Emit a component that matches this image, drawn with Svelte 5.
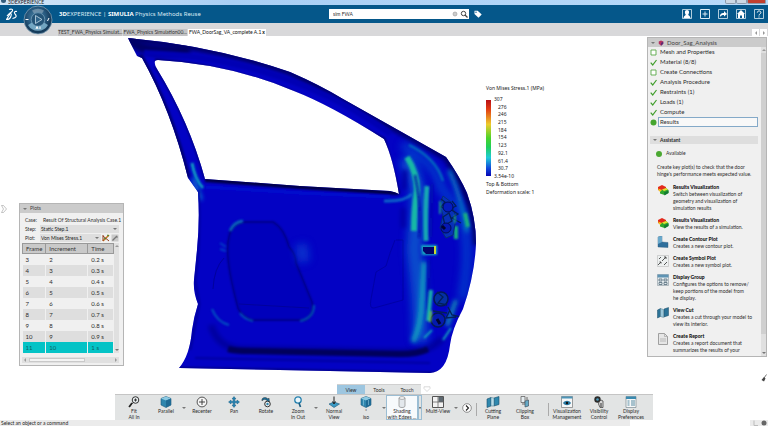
<script>
  let search = $state('sim FWA');
  let activeTab = $state(2);
  let activeStep = $state('Results');
  let selectedFrame = $state(11);
  let section = $state('View');

  const tabs = ['TEST_FWA_Physics Simulat...', 'FWA_Physics Simulation00...', 'FWA_DoorSag_VA_complete A.1'];

  const steps = [
    { label: 'Mesh and Properties', done: false },
    { label: 'Material (8/8)', done: true },
    { label: 'Create Connections', done: false },
    { label: 'Analysis Procedure', done: true },
    { label: 'Restraints (1)', done: true },
    { label: 'Loads (1)', done: true },
    { label: 'Compute', done: true },
    { label: 'Results', done: true, current: true }
  ];

  const actions = [
    { icon: 'results', title: 'Results Visualization', lines: ['Switch between visualization of', 'geometry and visualization of', 'simulation results'] },
    { icon: 'results', title: 'Results Visualization', lines: ['View the results of a simulation.'] },
    { icon: 'contour', title: 'Create Contour Plot', lines: ['Creates a new contour plot.'] },
    { icon: 'symbol', title: 'Create Symbol Plot', lines: ['Creates a new symbol plot.'] },
    { icon: 'group', title: 'Display Group', lines: ['Configures the options to remove/', 'keep portions of the model from', 'he display.'] },
    { icon: 'cut', title: 'View Cut', lines: ['Creates a cut through your model to', 'view its interior.'] },
    { icon: 'report', title: 'Create Report', lines: ['Creates a report document that', 'summarizes the results of your'] }
  ];

  const frames = [3, 4, 5, 6, 7, 8, 9, 10, 11].map((n) => ({
    frame: n,
    increment: n - 1,
    time: n === 11 ? '1 s' : `0.${n - 1} s`
  }));

  const legend = ['307', '276', '246', '215', '184', '154', '123', '92.1', '61.4', '30.7', '3.54e-10'];

  const tools = [
    { id: 'fit', lines: ['Fit', 'All In'] },
    { id: 'cube', lines: ['Parallel'], menu: true },
    { id: 'recenter', lines: ['Recenter'] },
    { id: 'pan', lines: ['Pan'] },
    { id: 'rotate', lines: ['Rotate'] },
    { id: 'zoom', lines: ['Zoom', 'In Out'], menu: true },
    { id: 'normal', lines: ['Normal', 'View'] },
    { id: 'iso', lines: ['*', 'iso'], menu: true },
    { id: 'shading', lines: ['Shading', 'with Edges ...'], menu: true, active: true },
    { id: 'multi', lines: ['Multi-View'], menu: true },
    { id: 'more' },
    { id: 'divider' },
    { id: 'cutting', lines: ['Cutting', 'Plane'] },
    { id: 'clipping', lines: ['Clipping', 'Box'] },
    { id: 'divider', wide: true },
    { id: 'visual', lines: ['Visualization', 'Management'] },
    { id: 'visibility', lines: ['Visibility', 'Control'] },
    { id: 'prefs', lines: ['Display', 'Preferences'] }
  ];
</script>

{#snippet toolIcon(id)}
  <svg class="tool-icon" viewBox="0 0 14 12" aria-hidden="true">
    {#if id === 'fit'}
      <circle cx="8.5" cy="4" r="3.3" fill="#e8eef0" stroke="#333" />
      <path d="M6 6.5L2.5 11M7 4h3M8.5 2.5v3" stroke="#333" fill="none" />
      <path d="M2 11l3-4" stroke="#222" stroke-width="1.6" />
    {:else if id === 'cube' || id === 'iso'}
      <path d="M7 .5l5 2v6.5l-5 2.5-5-2.5V2.5z" fill="#2f86ae" stroke="#1b5878" stroke-width=".6" />
      <path d="M7 .5l5 2-5 2-5-2z" fill="#8cc9e2" />
      <path d="M7 4.5l5-2v6.5l-5 2.5z" fill="#1f6a94" />
      {#if id === 'iso'}<path d="M4.500 3.500v6M9.500 4v5" stroke="#a7d8ea" stroke-width=".5" />{/if}
    {:else if id === 'recenter'}
      <circle cx="7" cy="6" r="4.9" fill="#f5f5f5" stroke="#444" stroke-width=".9" />
      <path d="M7 3v6M4 6h6" stroke="#333" stroke-width=".9" />
    {:else if id === 'pan'}
      <path d="M7 .5l2 2.5H7.800v2.200h2.200V4l2.500 2-2.500 2V6.800H7.800V9H9l-2 2.500L5 9h1.200V6.800H4V8L1.500 6 4 4v1.200h2.200V3H5z" fill="#2382b2" stroke="#125377" stroke-width=".4" />
    {:else if id === 'rotate'}
      <path d="M3 5C2 2 6 0 9 3l1-1 .5 4H7l1-1.500C6.500 3 4.500 3 3 5z" fill="#1c6e98" stroke="#222" stroke-width=".4" />
      <circle cx="8.500" cy="8" r="2.800" fill="#eee" stroke="#333" />
      <circle cx="8.500" cy="8" r="1.200" fill="#2a83ae" />
    {:else if id === 'zoom'}
      <circle cx="7" cy="4" r="3.200" fill="#eaf5fa" stroke="#2580ae" stroke-width="1.300" />
      <path d="M8 7l1.500 4" stroke="#1b5c80" stroke-width="1.700" />
    {:else if id === 'normal'}
      <path d="M2 8l5-2 5.500 2L7 11.500z" fill="#3a9ac4" stroke="#1b5878" stroke-width=".6" />
      <path d="M7 .5v7M5.500 5.500L7 8l1.500-2.500" stroke="#222" fill="none" />
    {:else if id === 'shading'}
      <path d="M4 2v8c0 2 6 2 6 0V2" fill="#e3e8ec" stroke="#888" stroke-width=".7" />
      <ellipse cx="7" cy="2" rx="3" ry="1.300" fill="#fff" stroke="#888" stroke-width=".7" />
    {:else if id === 'multi'}
      <path d="M1.500 .5h11v11h-11z" fill="#f2f2f2" stroke="#555" />
      <path d="M7.500 1h4.500v5H7.500z" fill="#5d6870" />
      <path d="M7 1v10.500M2 6h10.500" stroke="#666" stroke-width=".8" />
    {:else if id === 'cutting'}
      <path d="M1 3l4-1.500v8.500L1 11.500zM8 2l5-1.500v8L8 10z" fill="#2f88ae" stroke="#174f6c" stroke-width=".6" />
      <path d="M5 1.500l3 .5v8l-3 0z" fill="#b8dce8" stroke="#47778c" stroke-width=".5" />
    {:else if id === 'clipping'}
      <path d="M3 .5h4v6H3z" fill="#e5edf0" stroke="#555" stroke-width=".7" />
      <path d="M7 5l3.500-1v6L7 11z" fill="#65aac6" stroke="#345" stroke-width=".6" />
      <path d="M4 8h3M9 1v3" stroke="#333" stroke-width=".7" />
    {:else if id === 'visual'}
      <path d="M1.500 .5h11v11h-11z" fill="#f5f7f8" stroke="#777" stroke-width=".7" />
      <path d="M1.500 .5h11v2h-11z" fill="#4d95b8" />
      <path d="M3 7c2-3 6-3 8 0-2 3-6 3-8 0z" fill="#2a79a2" />
      <circle cx="7" cy="7" r="1.200" fill="#111" />
    {:else if id === 'visibility'}
      <circle cx="5.500" cy="3.500" r="3.200" fill="#2b2b2b" />
      <circle cx="5.500" cy="3.500" r="1.300" fill="#4f9bbb" />
      <path d="M7 6l2-2 2 1v6.500H8L6.500 8z" fill="#d8d8d8" stroke="#333" stroke-width=".7" />
      <path d="M9 7v4" stroke="#333" />
    {:else if id === 'prefs'}
      <path d="M2 .5h10v11H2z" fill="#f5f7f8" stroke="#7b8990" stroke-width=".7" />
      <path d="M2 .5h10v2.500H2z" fill="#3a8ab0" />
      <path d="M3.500 5h2M3.500 7h2M3.500 9h2M7 5h4M7 7h4M7 9h4" stroke="#487f98" stroke-width=".9" />
    {/if}
  </svg>
{/snippet}

{#snippet actionIcon(id)}
  <svg class="action-icon" viewBox="0 0 12 12" aria-hidden="true">
    {#if id === 'results'}
      <path d="M1 3l4-2 4 2v3L5 7.500 1 6z" fill="#e32a1c" />
      <path d="M1 4.500l4 1.500v3L2 7z" fill="#f2c51c" />
      <path d="M5 6l4-2 2.500 2v3L7.500 11 3 9.500V8z" fill="#2ea72c" />
      <path d="M5 5.500l4-1.500 2 1.500-4 1.500z" fill="#e8df32" />
      <path d="M7 8.500l4.500-2v2.500L7.500 11.500z" fill="#157a35" />
    {:else if id === 'contour'}
      <path d="M1 1l4-1v6l6 .5v5L1 11z" fill="#2f6f9c" stroke="#28587c" stroke-width=".4" />
      <path d="M1 1l4-1v6l-4 2z" fill="#6aa9cc" />
    {:else if id === 'symbol'}
      <path d="M.5 .5h11v11H.5z" fill="#edf0f0" stroke="#b0b0b0" stroke-width=".5" />
      <path d="M1 10l3-3M5 6l4-4M7 10l3-3M2 4l2-2M9 2H7M9 2v2M4 7H2.500M4 7v1.500" stroke="#444" stroke-width=".9" fill="none" />
    {:else if id === 'group'}
      <path d="M.5 .5h11v11H.5z" fill="#e4ebee" stroke="#8997a0" stroke-width=".6" />
      <path d="M.5 .5h11v3H.5z" fill="#5e93b3" />
      <path d="M2 5h3v2H2zM7 5h3v2H7zM2 8.500h3v2H2zM7 8.500h3v2H7z" fill="none" stroke="#536b78" stroke-width=".8" />
    {:else if id === 'cut'}
      <path d="M.5 3l3-1.500v8L.5 11zM7 2l4.500-1.500v8L7 10z" fill="#2b7297" stroke="#1b4d69" stroke-width=".5" />
      <path d="M3.500 1.500l3 1v8l-3-1z" fill="#9bc7da" stroke="#4c7b90" stroke-width=".5" />
    {:else}
      <path d="M1.500 .5h6l3 3v8h-9z" fill="#e6e6e6" stroke="#8d8d8d" stroke-width=".8" />
      <path d="M7.500 .5v3h3M3 6h6M3 8h6" fill="none" stroke="#a4a4a4" stroke-width=".7" />
    {/if}
  </svg>
{/snippet}

<div class="app">
  <div class="titlebar">
    <span class="logo-dot"></span>
    <span class="window-title">3DEXPERIENCE</span>
    <div class="window-buttons">
      <button aria-label="Minimize"></button>
      <button aria-label="Maximize"></button>
      <button class="close" aria-label="Close"></button>
    </div>
  </div>

  <header class="topbar">
    <svg class="ds-logo" viewBox="0 0 12 13" aria-hidden="true">
      <path d="M3 1.500c3-1 4.500 0 3 2L3.500 5.500M1 8c3-4 5-3 4 0-.5 2-2 3.500-4.500 3.500L4 6M11 3.500c-2-.5-3.500.5-2 2.500 2 2 1.500 4-2.500 4.500" fill="none" stroke="#fff" stroke-width="1.100" />
    </svg>
    <button class="compass" aria-label="Compass">
      <svg viewBox="0 0 30 30" aria-hidden="true">
        <defs>
          <radialGradient id="compass-ring" cx=".45" cy=".4">
            <stop offset="0" stop-color="#4e88ab" />
            <stop offset=".65" stop-color="#285a7f" />
            <stop offset="1" stop-color="#163c5c" />
          </radialGradient>
        </defs>
        <circle cx="15" cy="15" r="14" fill="url(#compass-ring)" stroke="#8babc0" stroke-width=".7" />
        <path d="M5 20a11.500 11.500 0 0 0 20 0l-4-2.500a7 7 0 0 1-12 0z" fill="#8dc3dc" opacity=".75" />
        <path d="M9 5.500a11.500 11.500 0 0 1 12 0l-2 3a8 8 0 0 0-8 0z" fill="#a5b8c5" opacity=".5" />
        <circle cx="15" cy="14.500" r="6.800" fill="#245477" stroke="#7fa8c2" stroke-width=".7" />
        <path d="M12.500 10.500l6.500 4-6.500 4z" fill="#2f6489" stroke="#c5dbe8" stroke-width=".8" />
        <path d="M2.500 14.500h3M26 13l-1.500 3M13 24l1-2.500 1 2.500M17 21.500V24" stroke="#fff" fill="none" />
      </svg>
    </button>
    <h1><b>3D</b>EXPERIENCE | <b>SIMULIA</b> Physics Methods Reuse</h1>

    <label class="search">
      <input type="text" aria-label="Search" bind:value={search} />
      <svg viewBox="0 0 18 8" aria-hidden="true">
        <circle cx="4" cy="4" r="2" fill="#ccc" stroke="#999" stroke-width=".6" />
        <circle cx="12.500" cy="3.500" r="2.200" fill="none" stroke="#444" />
        <path d="M14 5l2.500 2.500" stroke="#444" stroke-width="1.200" />
      </svg>
    </label>
    <button class="tag" aria-label="Tags">
      <svg viewBox="0 0 8 8" aria-hidden="true">
        <path d="M.5 .8h3.200l4 3.700-3.200 3.200-4-3.700z" fill="#fff" />
        <circle cx="2" cy="2.300" r=".7" fill="#05578a" />
      </svg>
    </button>

    <nav class="top-icons">
      <button aria-label="Profile">
        <svg viewBox="0 0 10 10"><path d="M.5 .5h9v9h-9z" fill="none" stroke="#dcebf3" stroke-width=".8" /><path d="M5 1c2.500 0 2.500 3 1.200 4.500 0 1 1.800 1 2.300 3.500h-7C2 6.500 3.800 6.500 3.800 5.500 2.500 4 2.500 1 5 1z" fill="#fff" /></svg>
      </button>
      <button aria-label="Add">
        <svg viewBox="0 0 10 10"><path d="M.5 .5h9v9h-9zM5 2.500v5M2.500 5h5" fill="none" stroke="#dcebf3" /></svg>
      </button>
      <button aria-label="Share">
        <svg viewBox="0 0 10 10"><path d="M.5 .5h9v9h-9z" fill="none" stroke="#dcebf3" stroke-width=".8" /><path d="M2 8c0-3 1-4 4-4V2l3 3-3 2.500V6C4 6 3 6.500 2 8z" fill="#fff" /></svg>
      </button>
      <button aria-label="Home">
        <svg viewBox="0 0 10 10"><path d="M.5 .5h9v9h-9z" fill="none" stroke="#dcebf3" stroke-width=".8" /><path d="M5 1l4 4H8v4H6V6.500H4V9H2V5H1z" fill="#fff" /></svg>
      </button>
      <button aria-label="Help">
        <svg viewBox="0 0 10 10"><path d="M.5 .5h9v9h-9z" fill="none" stroke="#dcebf3" stroke-width=".8" /><path d="M3.300 3.600c0-2.200 3.600-2.200 3.600 0C6.900 5 5 4.800 5 6.500M5 7.500v1" fill="none" stroke="#fff" /></svg>
      </button>
    </nav>
  </header>

  <div class="tabs">
    {#each tabs as tab, i}
      <button class="tab" class:active={activeTab === i} onclick={() => (activeTab = i)}>
        <span>{tab}</span>{#if activeTab === i}<b>x</b>{/if}
      </button>
    {/each}
    <div class="tab-arrows">
      <button aria-label="Previous tab"><span class="arrow left"></span></button>
      <button aria-label="Next tab"><span class="arrow right"></span></button>
    </div>
  </div>

  <main class="viewport">
    <svg class="model" viewBox="0 36 768 384" preserveAspectRatio="xMinYMin meet" role="img" aria-label="Car door stress plot">
      <defs>
        <filter id="blur1" filterUnits="userSpaceOnUse" x="100" y="20" width="400" height="370"><feGaussianBlur stdDeviation="1.200" /></filter>
        <filter id="blur2" filterUnits="userSpaceOnUse" x="100" y="20" width="400" height="370"><feGaussianBlur stdDeviation="2" /></filter>
        <filter id="blur4" filterUnits="userSpaceOnUse" x="100" y="20" width="400" height="370"><feGaussianBlur stdDeviation="4" /></filter>
        <clipPath id="door-clip">
          <path
            clip-rule="evenodd"
            d="M128 38Q215 46 290 72Q320 85 343 99L446 157Q460 177 467 193Q476 218 476 243Q475 274 463 309Q452 329 450 345Q447 372 430 373L179 368Q190 355 192 330Q194 316 198 304Q193 292 194 280L197 250Q200 220 198 192L188 178Q171 110 142 58L137 56zM155 61Q154 64 157 69Q189 121 205 179L300 186L390 191Q395 192 399 194Q393 158 384 139Q330 105 294 91Q230 64 158 60Q156 60 155 61z"
          />
        </clipPath>
      </defs>
      <g clip-path="url(#door-clip)" fill="none">
        <path d="M120 30h370v350H120z" fill="#0302c4" />

        <!-- window frame -->
        <path d="M128 39Q215 46 290 72L343 99 446 157Q476 200 476 245" stroke="#010166" stroke-width="7" filter="url(#blur2)" />
        <path d="M128 38Q140 55 190 49" stroke="#010166" stroke-width="10" filter="url(#blur2)" />
        <path d="M144 53Q215 55 280 77T390 134" stroke="#0404b4" stroke-width="6" filter="url(#blur1)" />
        <path d="M155 60Q220 64 290 91L384 139 399 194" stroke="#020270" stroke-width="3" filter="url(#blur1)" />
        <path d="M140 55Q171 110 188 178" stroke="#010170" stroke-width="5" filter="url(#blur1)" />
        <path d="M155 66Q187 115 205 178" stroke="#020288" stroke-width="3" filter="url(#blur1)" />
        <path d="M205 180L300 187 398 193" stroke="#010142" stroke-width="4" filter="url(#blur1)" />
        <path d="M206 187L300 193 390 197" stroke="#0510cf" stroke-width="3" filter="url(#blur1)" />
        <path d="M192 163Q195 180 203 188" stroke="#0ba0c2" stroke-width="3" filter="url(#blur1)" />
        <path d="M193 178L201 200" stroke="#0a72d0" stroke-width="4" filter="url(#blur2)" />

        <!-- lower edge -->
        <path d="M211 325Q217 346 238 349L400 352Q432 352 442 338" stroke="#0202a0" stroke-width="7" filter="url(#blur2)" />
        <path d="M228 349Q235 351 250 351L400 354Q418 354 428 349" stroke="#01015c" stroke-width="6" filter="url(#blur1)" />
        <path d="M195 358L430 363" stroke="#0202a0" stroke-width="2" filter="url(#blur1)" />
        <path d="M179 368L440 373" stroke="#020278" stroke-width="2" filter="url(#blur1)" />
        <path d="M198 190Q201 235 195 280L199 304 190 350" stroke="#0203a3" stroke-width="3" filter="url(#blur1)" />

        <!-- speaker opening -->
        <path d="M229 237Q231 223 245 222H273Q284 228 289 247Q296 254 296 263L312 302Q315 315 305 320H251Q238 314 237 304Q224 255 229 237" fill="#0202bb" stroke="#010190" stroke-width="2" filter="url(#blur1)" />
        <path d="M229 237Q231 223 245 222H273Q284 228 289 247Q296 254 296 263L312 302Q315 315 305 320H251Q238 314 237 304Q224 255 229 237" stroke="#010192" stroke-width=".8" />
        <path d="M239 304L309 308M224 258Q214 268 213 289" stroke="#02029c" stroke-width="1" />
        <path d="M230 231Q234 222 243 221" stroke="#0880bd" stroke-width="3" filter="url(#blur1)" opacity=".8" />
        <path d="M301 244L304 262" stroke="#0749d2" stroke-width="12" filter="url(#blur4)" opacity=".7" />
        <path d="M314 305Q314 318 300 321M240 313Q244 319 253 321M212 309Q217 322 229 325" stroke="#0778c0" stroke-width="2" filter="url(#blur1)" opacity=".75" />
        <path d="M220 243L226 247M220 249L226 251" stroke="#056cc8" stroke-width="2" filter="url(#blur1)" opacity=".6" />

        <!-- inner panel outline -->
        <path d="M396 240H403V300L374 308Q369 309 371 299L376 272 386 266Q390 252 395 240" stroke="#0101a0" stroke-width=".8" />

        <!-- hinge side stress bands -->
        <path d="M405 158Q418 178 418 202L414 250Q421 304 420 342" stroke="#0762cf" stroke-width="15" filter="url(#blur4)" opacity=".8" />
        <path d="M402 145Q438 165 441 188L461 212Q472 247 462 300" stroke="#0650cf" stroke-width="8" filter="url(#blur4)" opacity=".8" />
        <path d="M407 157Q417 173 417 190Q414 209 414 231" stroke="#14b8a6" stroke-width="6" filter="url(#blur1)" />
        <path d="M427 186Q425 209 426 241" stroke="#12a8b4" stroke-width="5" filter="url(#blur1)" />
        <path d="M424 262L422 300Q421 326 413 342" stroke="#109fc0" stroke-width="5" filter="url(#blur2)" />
        <path d="M409 145Q436 158 443 181" stroke="#078abc" stroke-width="2" filter="url(#blur1)" opacity=".8" />
        <path d="M415 175Q422 209 419 238M432 184L431 237M429 260L428 310" stroke="#020bae" stroke-width="2" filter="url(#blur1)" />
        <path d="M384 201Q404 202 412 194" stroke="#0b83cb" stroke-width="3" filter="url(#blur1)" opacity=".8" />
        <path d="M449 170Q463 202 467 232" stroke="#087ac0" stroke-width="4" filter="url(#blur2)" />
        <path d="M465 213L468 227M456 226V239" stroke="#18b080" stroke-width="4" filter="url(#blur1)" />
        <path d="M431 290L428 321" stroke="#17b0ab" stroke-width="4" filter="url(#blur1)" />
        <path d="M456 300L447 326" stroke="#1192b6" stroke-width="4" filter="url(#blur2)" />
        <path d="M432 330L424 338M451 328L443 340" stroke="#12a3bd" stroke-width="2" filter="url(#blur1)" />
        <path d="M405 170L404 190M403 208V228" stroke="#0406a6" stroke-width="5" filter="url(#blur2)" />

        <!-- latch slot -->
        <path d="M421 245H437V255H422z" fill="#13a6c0" filter="url(#blur1)" />
        <path d="M435 246V254" stroke="#c8d832" stroke-width="2" />
        <path d="M423 247H434V254H426L423 251z" fill="#02026c" />

        <!-- hinges -->
        <path d="M443 196L440 205 443 215 440 228 446 238 453 235 456 218 451 202z" fill="#0730b8" stroke="#05307a" stroke-width="1" />
        <path d="M441 199l4 3-4 5 5 2M452 201l4 5-6 3 8 5-6 4 9 5M443 217l6-4 3 8-7 4z" stroke="#021f5a" stroke-width="1.300" />
        <circle cx="448" cy="207" r="5" fill="#041bbf" stroke="#010d5b" />
        <circle cx="446" cy="228" r="5" fill="#0518b1" stroke="#010d5b" />
        <path d="M440 201v13M455 215v8" stroke="#2abf86" stroke-width="1.500" filter="url(#blur1)" />
        <circle cx="441" cy="299" r="7" fill="#0530a4" stroke="#031958" stroke-width="1.500" />
        <circle cx="438" cy="320" r="7" fill="#041aae" stroke="#031958" stroke-width="1.500" />
        <path d="M437 292l6 5-5 6 9 2M448 307l4 8 9 2M433 311l14 2M450 310l-4 8 10-1" stroke="#02205a" stroke-width="1.300" />
        <path d="M431 311L430 322" stroke="#7fd344" stroke-width="2" filter="url(#blur1)" />
        <path d="M437 319l3 5M442 226l3 3" stroke="#000431" stroke-width="3" />
      </g>
    </svg>

    <button class="drawer" aria-label="Open tree">
      <svg viewBox="0 0 6 8"><path d="M.5 .5l2 0 3 3.500-3 3.500h-2l2-3.500z" fill="#fff" stroke="#aaa" stroke-width=".7" /></svg>
    </button>

    <figure class="legend">
      <figcaption>Von Mises Stress.1 (MPa)</figcaption>
      <div class="scale">
        <div class="ramp"></div>
        <ol>
          {#each legend as value, i}
            <li class:edge={i === 0 || i === legend.length - 1}>{value}</li>
          {/each}
        </ol>
      </div>
      <p>Top &amp; Bottom</p>
      <p>Deformation scale: 1</p>
    </figure>

    <section class="panel plots">
      <h2><span class="arrow down"></span>Plots</h2>
      <div class="plot-form">
        <span>Case:</span>
        <span class="case">Result Of Structural Analysis Case.1</span>
        <label for="step">Step:</label>
        <div class="select wide">
          <select id="step"><option>Static Step.1</option></select>
          <span class="arrow down"></span>
        </div>
        <label for="plot">Plot:</label>
        <div class="select">
          <select id="plot"><option>Von Mises Stress.1</option></select>
          <span class="arrow down"></span>
        </div>
        <button aria-label="Edit plot">
          <svg viewBox="0 0 8 8"><path d="M1 7l6-6" stroke="#c8731d" stroke-width="1.500" /><path d="M1 2l6 5M1 1v6" stroke="#913b1b" /><path d="M5 1l2 1M2 4l2 1" stroke="#3b8a2e" /></svg>
        </button>
        <button aria-label="Plot options">
          <svg viewBox="0 0 8 8"><path d="M.5 .5h7v7h-7z" fill="#c9c9c9" /><path d="M1.500 6.500l4-4 1 1" fill="none" stroke="#777" stroke-width="1.300" /></svg>
        </button>
      </div>
      <div class="table-box">
        <table>
          <thead>
            <tr><th>Frame</th><th>Increment</th><th>Time</th></tr>
          </thead>
          <tbody>
            {#each frames as row}
              <tr class:selected={row.frame === selectedFrame} onclick={() => (selectedFrame = row.frame)}>
                <td>{row.frame}</td>
                <td>{row.increment}</td>
                <td>{row.time}</td>
              </tr>
            {/each}
          </tbody>
        </table>
        <div class="vscroll"><span class="arrow up"></span><span class="arrow down"></span></div>
      </div>
      <div class="hscroll"><span class="arrow left"></span><i></i><span class="arrow right"></span></div>
    </section>

    <aside class="panel guide">
      <h2>
        <span class="arrow down"></span>
        <svg viewBox="0 0 8 8" aria-hidden="true"><path d="M1 2l3-1.500L7 2v3L4 7.500 1 5z" fill="#b5305f" /><path d="M4 4l3-2v3L4 7.500z" fill="#5d2b74" /></svg>
        Door_Sag_Analysis
      </h2>
      <div class="guide-body">
        <div class="guide-content">
          <ul class="steps">
            {#each steps as step}
              <li>
                <svg viewBox="0 0 7 7" aria-hidden="true">
                  {#if step.current}
                    <circle cx="3.500" cy="3.500" r="3" fill="#45a52e" />
                  {:else if step.done}
                    <path d="M.7 3.700l2 2.300L6.500 1" fill="none" stroke="#3f9d2a" stroke-width="1.200" />
                  {:else}
                    <path d="M1 1h5v5H1z" fill="#fff" stroke="#5aa848" stroke-width=".9" />
                  {/if}
                </svg>
                <button class:active={activeStep === step.label} onclick={() => (activeStep = step.label)}>{step.label}</button>
              </li>
            {/each}
          </ul>
          <h3><span class="arrow down"></span>Assistant</h3>
          <p class="available"><i></i>Available</p>
          <p class="hint">Create key plot(s) to check that the door<br />hinge's performance meets expected value.</p>
          <div class="actions">
            {#each actions as action}
              <article>
                {@render actionIcon(action.icon)}
                <div>
                  <h4>{action.title}</h4>
                  {#each action.lines as line}
                    <p>{line}</p>
                  {/each}
                </div>
              </article>
            {/each}
          </div>
        </div>
        <div class="vscroll"><span class="arrow up"></span><i></i><span class="arrow down"></span></div>
      </div>
    </aside>

    <svg class="brush" viewBox="0 0 6 8" aria-hidden="true"><path d="M5.500 .5L3 4" stroke="#777" /><path d="M3 3l1.500 1.500L3 7.500.5 6z" fill="#444" /></svg>

    <div class="action-bar">
      <div class="sections">
        {#each ['View', 'Tools', 'Touch'] as name}
          <button class:active={section === name} onclick={() => (section = name)}>{name}</button>
        {/each}
        <svg viewBox="0 0 8 6" aria-hidden="true"><path d="M4 5.500L1 2.500V.8h6v1.700z" fill="#fff" stroke="#ccc" stroke-width=".7" /></svg>
      </div>
      <div class="tools">
        {#each tools as tool}
          {#if tool.id === 'divider'}
            <span class="divider" class:wide={tool.wide}></span>
          {:else if tool.id === 'more'}
            <button class="more" aria-label="More tools">
              <svg viewBox="0 0 10 10"><circle cx="5" cy="5" r="4.300" fill="#fff" stroke="#666" stroke-width=".7" /><path d="M4 2.500L6.500 5 4 7.500" fill="none" stroke="#222" stroke-width="1.100" /></svg>
            </button>
          {:else}
            <button class="tool" class:active={tool.active}>
              {@render toolIcon(tool.id)}
              {#each tool.lines as line}
                <span>{line}</span>
              {/each}
            </button>
            {#if tool.menu}
              <button class="menu" class:active={tool.active} aria-label="{tool.lines[0]} options"><span class="arrow down"></span></button>
            {/if}
          {/if}
        {/each}
      </div>
    </div>
  </main>

  <footer class="status">
    <span>Select an object or a command</span>
    <input type="text" aria-label="Command" />
    <svg viewBox="0 0 18 6" aria-hidden="true"><path d="M4 .5v5h4" fill="none" stroke="#bbb" /><circle cx="14" cy="3" r="2.500" fill="#666" /></svg>
  </footer>
</div>

<style>
  :global(body) {
    margin: 0;
  }

  .app {
    display: flex;
    flex-direction: column;
    height: 100vh;
    overflow: hidden;
    background: #fff;
    color: #2c2c2c;
    font-family: Lato, 'Noto Sans', sans-serif;
    font-size: 6px;
    line-height: 7px;
  }

  .app * {
    box-sizing: border-box;
  }

  h1, h2, h3, h4, p, ul, ol, figure {
    margin: 0;
    padding: 0;
    list-style: none;
    font-size: inherit;
  }

  button, input, select {
    margin: 0;
    padding: 0;
    border: 0;
    background: none;
    color: inherit;
    font: inherit;
  }

  svg {
    display: block;
    flex: none;
  }

  .arrow {
    flex: none;
    border: 2px solid transparent;
    width: 0;
    height: 0;
  }

  .arrow.down {
    border-top-color: #777;
    border-bottom: 0;
  }

  .arrow.up {
    border-bottom-color: #999;
    border-top: 0;
  }

  .arrow.left {
    border-right-color: #999;
    border-left: 0;
  }

  .arrow.right {
    border-left-color: #999;
    border-right: 0;
  }

  /* window title */
  .titlebar {
    display: flex;
    flex: none;
    align-items: flex-start;
    height: 5px;
    padding-left: 1px;
    background: linear-gradient(90deg, #d5e6f6, #a9cff5 30%, #b9dbfa);
  }

  .logo-dot {
    width: 5px;
    height: 3px;
    margin-right: 2px;
    border-radius: 0 0 3px 3px;
    background: #345d7c;
  }

  .window-title {
    color: #222;
    font-size: 5px;
    line-height: 5px;
  }

  .window-buttons {
    display: flex;
    margin-left: auto;
    padding-right: 2px;
  }

  .window-buttons button {
    width: 11px;
    height: 4px;
    border: 1px solid #8b9aaa;
    border-top: 0;
    border-radius: 0 0 2px 2px;
    background: #ccd8e4;
  }

  .window-buttons .close {
    width: 19px;
    background: #c2402f;
  }

  /* header */
  .topbar {
    position: relative;
    display: flex;
    flex: none;
    align-items: center;
    height: 18px;
    padding: 0 4px 0 6px;
    background: #05578a;
    color: #fff;
  }

  .ds-logo {
    width: 12px;
    height: 13px;
  }

  .compass {
    position: absolute;
    z-index: 2;
    top: 0;
    left: 23px;
  }

  .compass svg {
    width: 30px;
    height: 30px;
  }

  h1 {
    margin-left: 41px;
    width: 270px;
    color: #dbeaf3;
    font-family: 'Noto Sans', sans-serif;
    font-weight: 400;
    white-space: nowrap;
  }

  h1 b {
    color: #fff;
    font-weight: 700;
  }

  .search {
    display: flex;
    align-items: center;
    width: 140px;
    height: 10px;
    background: #fff;
  }

  .search input {
    flex: 1;
    min-width: 0;
    padding-left: 4px;
    color: #333;
    font-size: 5px;
    outline: 0;
  }

  .search svg {
    width: 18px;
    height: 8px;
  }

  .tag {
    margin-left: 5px;
  }

  .tag svg {
    width: 8px;
    height: 8px;
  }

  .top-icons {
    display: flex;
    gap: 8px;
    margin-left: auto;
  }

  .top-icons svg {
    width: 10px;
    height: 10px;
  }

  /* document tabs */
  .tabs {
    display: flex;
    flex: none;
    align-items: flex-end;
    gap: 1px;
    height: 13px;
    padding: 0 1px 0 58px;
    background: #d8d8da;
  }

  .tab {
    display: flex;
    justify-content: space-between;
    height: 7px;
    min-width: 61px;
    background: #c3c3c5;
    color: #333;
    font-size: 5px;
    line-height: 7px;
    white-space: nowrap;
  }

  .tab.active {
    min-width: 78px;
    padding: 0 1px;
    background: #fff;
    color: #111;
  }

  .tab-arrows {
    display: flex;
    gap: 1px;
    margin-left: auto;
  }

  .tab-arrows button {
    display: grid;
    place-items: center;
    width: 7px;
    height: 7px;
    background: #fff;
  }

  /* 3D viewport */
  .viewport {
    position: relative;
    flex: 1;
    min-height: 0;
  }

  .model {
    width: 100%;
    height: 100%;
  }

  .drawer {
    position: absolute;
    top: 169px;
    left: 1px;
  }

  .drawer svg {
    width: 6px;
    height: 8px;
  }

  .legend {
    position: absolute;
    top: 48px;
    left: 486px;
    color: #222;
    font-family: 'Noto Sans', sans-serif;
    font-size: 5px;
    line-height: 8px;
    white-space: nowrap;
  }

  .scale {
    display: flex;
    gap: 3px;
    margin-top: 4px;
  }

  .ramp {
    width: 5px;
    margin: 4px 0;
    background: linear-gradient(#b80f16, #e23b12 12%, #eecb2c 32%, #4bd42a 50%, #1fcf5a 62%, #20cbd8 76%, #1046dc 90%, #0505b4);
  }

  .legend ol {
    height: 84px;
    display: flex;
    flex-direction: column;
    justify-content: space-between;
  }

  .legend li {
    padding-left: 4px;
    line-height: 7px;
  }

  .legend li.edge {
    padding-left: 0;
  }

  /* floating panels */
  .panel {
    position: absolute;
    border: 1px solid #b5b5b5;
    background: #f0f0f0;
  }

  .panel h2 {
    display: flex;
    flex: none;
    align-items: center;
    gap: 3px;
    height: 9px;
    padding-left: 3px;
    background: #cbcbcb;
    color: #444;
    font-weight: 400;
  }

  .plots {
    top: 167px;
    left: 19px;
    width: 105px;
    padding-bottom: 2px;
    font-size: 5px;
  }

  .plot-form {
    display: grid;
    grid-template-columns: 15px 1fr 9px 9px;
    align-items: center;
    row-gap: 1px;
    padding: 3px 4px 1px 5px;
  }

  .plot-form > span,
  .select {
    height: 8px;
    line-height: 8px;
    white-space: nowrap;
  }

  .case {
    grid-column: 2 / 5;
    padding-left: 3px;
  }

  .select {
    display: flex;
    align-items: center;
    padding-right: 2px;
    background: #dedede;
  }

  .select.wide {
    grid-column: 2 / 5;
  }

  .select select {
    appearance: none;
    flex: 1;
    min-width: 0;
    height: 8px;
    padding-left: 1px;
    color: #222;
  }

  .plot-form svg {
    width: 8px;
    height: 8px;
    margin-left: 1px;
  }

  .table-box {
    display: flex;
    margin: 0 4px 0 2px;
  }

  table {
    flex: 1;
    table-layout: fixed;
    border-collapse: collapse;
    font-size: 6px;
    line-height: 7px;
  }

  th {
    height: 10px;
    padding: 0 3px;
    border: 1px solid #999;
    background: #c9c9c9;
    color: #333;
    font-weight: 400;
    text-align: left;
  }

  th:nth-child(1) {
    width: 22px;
  }

  th:nth-child(2) {
    width: 42px;
  }

  td {
    height: 11px;
    padding: 0 3px;
    border-right: 1px solid #f0f0f0;
  }

  tbody tr:nth-child(even) {
    background: #dedede;
  }

  tbody tr.selected {
    background: #04c3c6;
    color: #0d6164;
  }

  .vscroll {
    display: flex;
    flex-direction: column;
    flex: none;
    align-items: center;
    justify-content: space-between;
    width: 5px;
    padding: 2px 0;
    background: #e0e0e0;
  }

  .hscroll {
    display: flex;
    align-items: center;
    height: 6px;
    margin: 4px 4px 0 2px;
    padding: 0 2px;
    background: #e0e0e0;
  }

  .hscroll i {
    width: 56px;
    height: 4px;
    margin: 0 auto 0 3px;
    background: #f3f3f3;
    border: 1px solid #c9c9c9;
  }

  .guide {
    top: 1px;
    right: 1px;
    bottom: 63px;
    display: flex;
    flex-direction: column;
    width: 120px;
  }

  .guide h2 svg {
    width: 6px;
    height: 6px;
  }

  .guide-body {
    display: flex;
    flex: 1;
    min-height: 0;
  }

  .guide-content {
    flex: 1;
    min-width: 0;
    overflow: hidden;
    padding: 0 3px 0 2px;
    white-space: nowrap;
  }

  .guide .vscroll i {
    width: 5px;
    flex: 1;
    margin: 2px 0 18px;
    background: #d0d0d0;
  }

  .steps li {
    display: flex;
    align-items: center;
    gap: 1px;
    height: 10px;
  }

  .steps svg {
    width: 7px;
    height: 7px;
  }

  .steps button {
    flex: 1;
    height: 10px;
    padding-left: 1px;
    border: 1px solid transparent;
    line-height: 8px;
    text-align: left;
  }

  .steps button.active {
    border-color: #84a9c8;
    background: #f8f8f8;
  }

  h3 {
    display: flex;
    align-items: center;
    gap: 3px;
    height: 8px;
    margin-top: 9px;
    padding-left: 3px;
    background: #dedede;
    font-size: 5px;
  }

  .available {
    display: flex;
    align-items: center;
    gap: 4px;
    margin: 6px 0 0 6px;
    font-size: 5px;
  }

  .available i {
    width: 6px;
    height: 6px;
    border-radius: 50%;
    background: #4ba832;
  }

  .hint {
    margin: 7px 0 0 7px;
    font-size: 5px;
  }

  .actions {
    display: flex;
    flex-direction: column;
    gap: 5px;
    margin: 6px 0 0 7px;
    font-size: 5px;
  }

  article {
    display: flex;
    gap: 4px;
  }

  .action-icon {
    width: 12px;
    height: 12px;
  }

  h4 {
    color: #111;
    font-weight: 900;
  }

  .brush {
    position: absolute;
    right: 1px;
    bottom: 38px;
    width: 6px;
    height: 8px;
  }

  /* bottom action bar */
  .action-bar {
    position: absolute;
    right: 0;
    bottom: 0;
    left: 0;
    display: flex;
    flex-direction: column;
    align-items: center;
    font-size: 5px;
    line-height: 6px;
  }

  .sections {
    display: flex;
    align-items: center;
  }

  .sections button {
    width: 28px;
    height: 10px;
    border-top: 1px solid #d0d0d0;
    background: #e2e4e4;
  }

  .sections button.active {
    background: #9dc6e0;
  }

  .sections svg {
    width: 8px;
    height: 6px;
    margin-left: 2px;
  }

  .tools {
    display: flex;
    height: 26px;
    padding: 0 6px 0 3px;
    border-top: 1px solid #c5c5c5;
    background: #e2e4e4;
  }

  .tool {
    display: flex;
    flex-direction: column;
    align-items: center;
    width: 32px;
    padding-top: 1px;
    white-space: nowrap;
  }

  .tool.active {
    background: #f7fafc;
    outline: 1px solid #9bbdd3;
    outline-offset: -1px;
  }

  .tool-icon {
    width: 14px;
    height: 12px;
  }

  .menu {
    display: flex;
    align-items: center;
    width: 4px;
  }

  .menu.active {
    outline: 1px solid #9bbdd3;
    outline-offset: -1px;
  }

  .more {
    display: grid;
    place-items: center;
    width: 18px;
  }

  .more svg {
    width: 10px;
    height: 10px;
  }

  .divider {
    width: 1px;
    margin: 8px 0 4px;
    background: #aaa;
  }

  .divider.wide {
    margin-right: 2px;
    margin-left: 7px;
  }

  /* status line */
  .status {
    display: flex;
    flex: none;
    align-items: center;
    height: 6px;
    padding-left: 1px;
    background: #ebebeb;
    color: #222;
    font-size: 5px;
    line-height: 6px;
  }

  .status input {
    width: 120px;
    height: 6px;
    margin-left: auto;
    background: #fff;
  }

  .status svg {
    width: 18px;
    height: 6px;
  }
</style>
